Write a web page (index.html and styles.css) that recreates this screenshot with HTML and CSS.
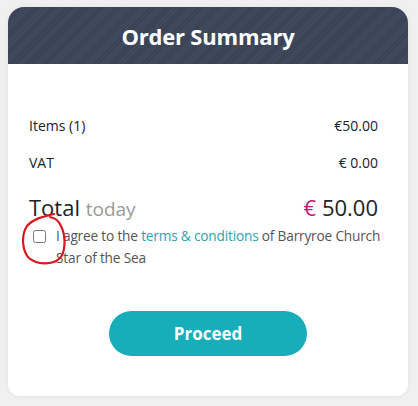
FILE: index.html
```
<!DOCTYPE html>
<html>
<head>
<meta charset="utf-8">
<link rel="stylesheet" href="styles.css">
</head>
<body>
<div class="card">
  <div class="header"><h1 class="title">Order Summary</h1></div>
  <div class="body">
    <div class="row"><span>Items (1)</span><span>€50.00</span></div>
    <div class="row vat"><span>VAT</span><span>€ 0.00</span></div>
    <div class="row total"><span>Total <span class="today">today</span></span><span><span class="euro">€</span> 50.00</span></div>
    <div class="agree">
      <input type="checkbox" class="check">
      <span class="agree-text">I agree to the <a class="link">terms &amp; conditions</a> of Barryroe Church Star of the Sea</span>
      <svg class="circle" width="52" height="54" viewBox="0 0 52 54"><path d="M35 1 C27 3 15 5 8 13 C2 22 3 38 10 45 C18 52 33 52 40 46 C47 40 47 23 42 13 C40 8 36 5 31 4" fill="none" stroke="#d8161b" stroke-width="2.2" stroke-linecap="round"/></svg>
    </div>
    <div class="actions"><button class="proceed">Proceed</button></div>
  </div>
</div>
</body>
</html>
```
FILE: styles.css
```
html, body { margin: 0; padding: 0; }
body {
  background: #f0f0f1;
  font-family: "Open Sans", "Noto Sans", sans-serif;
  color: #222;
  width: 418px;
  height: 406px;
  overflow: hidden;
}
.card {
  margin: 7px 10px 0 8px;
  width: 400px;
  height: 389px;
  background: #fff;
  border-radius: 16px 16px 12px 12px;
  box-shadow: 0 0 6px rgba(0,0,0,0.06);
  overflow: hidden;
}
.header {
  height: 57px;
  background-color: #3b4558;
  background-image: repeating-linear-gradient(135deg, rgba(255,255,255,0.045) 0 1px, rgba(0,0,0,0.07) 1px 2px);
  display: flex;
  align-items: center;
  justify-content: center;
}
.title {
  margin: 0;
  color: #fff;
  font-size: 22px;
  font-weight: 700;
  letter-spacing: -0.2px;
}
.body {
  padding: 52px 30px 0 21px;
  position: relative;
}
.row {
  display: flex;
  justify-content: space-between;
  font-size: 14px;
  line-height: 20px;
  color: #222;
}
.vat { margin-top: 17px; }
.total {
  margin-top: 20px;
  font-size: 22px;
  line-height: 28px;
  align-items: baseline;
}
.today { color: #999; font-size: 19px; }
.euro { color: #c2177c; }
.agree {
  position: relative;
  display: flex;
  align-items: flex-start;
  margin-top: 2px;
  margin-right: -14px;
  padding-left: 4px;
}
.check {
  margin: 5px 0 0 0;
  width: 13px;
  height: 13px;
  flex: none;
}
.agree-text {
  margin-left: 10px;
  font-size: 13.7px;
  line-height: 22px;
  letter-spacing: -0.2px;
  color: #555;
}
.link { color: #2aa4b2; text-decoration: none; }
.circle {
  position: absolute;
  left: -10px;
  top: -12px;
}
.actions {
  display: flex;
  justify-content: center;
  margin-top: 42px;
  padding-left: 9px;
}
.proceed {
  width: 198px;
  height: 45px;
  border: none;
  border-radius: 23px;
  background: #17adb9;
  color: #fff;
  font-family: "Open Sans", sans-serif;
  font-size: 17px;
  font-weight: 700;
}
```
